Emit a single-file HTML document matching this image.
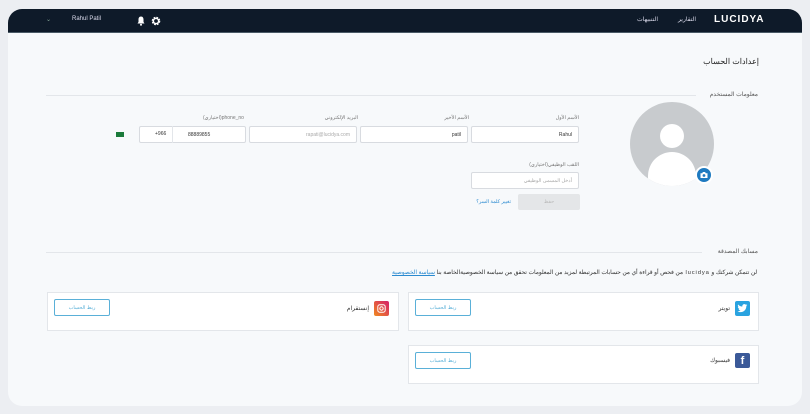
<!DOCTYPE html>
<html><head><meta charset="utf-8"><style>
*{margin:0;padding:0;box-sizing:border-box}
body{width:810px;height:414px;background:#eceef2;font-family:"Liberation Sans","Noto Sans CJK SC",sans-serif;position:relative;overflow:hidden}
.frame{position:absolute;left:8px;top:9px;width:794px;height:397px;background:#f7f9fb;border-radius:14px;overflow:hidden}
.bar{position:absolute;left:0;top:0;width:794px;height:24px;background:#0e1a29;border-bottom:1px solid #4a5a66}
.a{position:absolute;white-space:nowrap}
.r{position:absolute;white-space:nowrap;direction:rtl}
.t{font-size:6px;color:#777}
.in{position:absolute;height:17px;background:#fff;border:1px solid #d8dbe0;border-radius:2px;font-size:5px;color:#333;text-align:right;padding:5px 6px 0}
.line{position:absolute;height:1px;background:#e3e6ea}
.card{position:absolute;background:#fff;border:1px solid #e3e6ea}
.btn{position:absolute;width:56px;height:17px;border:1px solid #5ab0d8;border-radius:2px;background:#fff;font-size:5px;color:#5ab0d8;text-align:center;padding-top:5px}
</style></head><body>
<div class="frame">
<div class="bar">
<div class="a" style="left:38px;top:7px;font-size:6px;color:#8a9;">⌄</div>
<div class="a" style="left:64px;top:7px;font-size:6px;color:#dde">Rahul Patil</div>
<svg class="a" style="left:129px;top:7px" width="8" height="10" viewBox="0 0 8 10"><path d="M4 0.5C2.2 0.5 1.5 2 1.5 3.5V6L0.5 7.5H7.5L6.5 6V3.5C6.5 2 5.8 0.5 4 0.5Z" fill="#fff"/><circle cx="4" cy="8.8" r="1" fill="#fff"/></svg>
<svg class="a" style="left:143px;top:7px" width="10" height="10" viewBox="0 0 10 10"><circle cx="5" cy="5" r="3.2" fill="none" stroke="#fff" stroke-width="2.2" stroke-dasharray="1.6 0.9"/><circle cx="5" cy="5" r="2.6" fill="none" stroke="#fff" stroke-width="1.4"/></svg>
<div class="a" style="left:629px;top:7px;font-size:6px;color:#dde">التنبيهات</div>
<div class="a" style="left:670px;top:7px;font-size:6px;color:#dde">التقارير</div>
<div class="a" style="left:706px;top:5px;font-size:10px;color:#fff;font-weight:bold;letter-spacing:1px">LUCIDYA</div>
</div>
<div class="r" style="right:43px;top:48px;font-size:8px;color:#222">إعدادات الحساب</div>
<div class="r t" style="right:44px;top:82px;color:#555">معلومات المستخدم</div>
<div class="line" style="left:38px;top:86px;width:650px"></div>
<div class="r t" style="right:223px;top:106px;font-size:5px">الأسم الأول</div>
<div class="r t" style="right:333px;top:106px;font-size:5px">الأسم الأخير</div>
<div class="r t" style="right:444px;top:106px;font-size:5px">البريد الإلكتروني</div>
<div class="a t" style="left:195px;top:106px;font-size:5px">(اختياري)phone_no</div>
<div class="in" style="left:463px;top:117px;width:108px">Rahul</div>
<div class="in" style="left:352px;top:117px;width:108px">patil</div>
<div class="in" style="left:241px;top:117px;width:108px;color:#aaa">rapati@lucidya.com</div>
<div class="in" style="left:131px;top:117px;width:107px;text-align:left;padding-left:48px">88889855</div>
<div class="a" style="left:164px;top:117px;width:1px;height:17px;background:#e3e6ea"></div>
<div class="a" style="left:147px;top:122px;font-size:5px;color:#333">+966</div>
<div class="a" style="left:108px;top:123px;width:8px;height:5px;background:#1a7a3a"></div>
<div class="r t" style="right:223px;top:153px;font-size:5px">اللقب الوظيفي(اختياري)</div>
<div class="in" style="left:463px;top:163px;width:108px;color:#aaa">أدخل المسمى الوظيفي</div>
<div class="a" style="left:510px;top:185px;width:62px;height:16px;background:#e4e6e8;border-radius:2px;font-size:5px;color:#bbb;text-align:center;padding-top:5px">حفظ</div>
<div class="r" style="right:291px;top:190px;font-size:5px;color:#2a8ad0">تغيير كلمة السر؟</div>
<div class="a" style="left:622px;top:93px;width:84px;height:84px;border-radius:50%;background:#c8cbce;overflow:hidden">
<div class="a" style="left:30px;top:22px;width:24px;height:24px;border-radius:50%;background:#fff"></div>
<div class="a" style="left:18px;top:50px;width:48px;height:40px;border-radius:24px 24px 0 0;background:#fff"></div>
</div>
<div class="a" style="left:687px;top:157px;width:18px;height:18px;border-radius:50%;background:#1e7ac0;border:2px solid #fff"></div>
<svg class="a" style="left:692px;top:162px" width="8" height="8" viewBox="0 0 8 8"><path d="M0.5 2.2H2.2L2.9 1H5.1L5.8 2.2H7.5V7H0.5Z" fill="#fff"/><circle cx="4" cy="4.5" r="1.4" fill="#1e7ac0"/></svg>
<div class="r t" style="right:44px;top:239px;color:#555">مسابك المصدقة</div>
<div class="line" style="left:38px;top:243px;width:656px"></div>
<div class="r" style="right:45px;top:261px;font-size:5.8px;color:#333;letter-spacing:0.9px">لن تتمكن شركتك و lucidya من فحص أو قراءة أي من حسابات المرتبطة لمزيد من المعلومات تحقق من سياسة الخصوصيةالخاصة بنا <span style="color:#2a8ad0;text-decoration:underline">سياسة الخصوصية</span></div>
<div class="card" style="left:39px;top:283px;width:352px;height:39px"></div>
<div class="card" style="left:400px;top:283px;width:351px;height:39px"></div>
<div class="card" style="left:400px;top:336px;width:351px;height:39px"></div>
<div class="btn" style="left:46px;top:290px">ربط الحساب</div>
<div class="btn" style="left:407px;top:290px">ربط الحساب</div>
<div class="btn" style="left:407px;top:343px">ربط الحساب</div>
<div class="a" style="left:366px;top:292px;width:15px;height:15px;border-radius:2px;background:linear-gradient(45deg,#f08a20,#d41e6a)"></div>
<svg class="a" style="left:369px;top:295px" width="9" height="9" viewBox="0 0 9 9"><rect x="0.8" y="0.8" width="7.4" height="7.4" rx="2" fill="none" stroke="#fff" stroke-width="1"/><circle cx="4.5" cy="4.5" r="1.7" fill="none" stroke="#fff" stroke-width="1"/></svg>
<div class="r t" style="right:433px;top:296px;color:#333">إنستقرام</div>
<div class="a" style="left:727px;top:292px;width:15px;height:15px;border-radius:2px;background:#2aa3e0"></div>
<svg class="a" style="left:729px;top:295px" width="11" height="9" viewBox="0 0 24 20"><path d="M23 2.5c-.8.4-1.7.6-2.6.7.9-.6 1.6-1.4 2-2.5-.9.5-1.900.9-2.900 1.100C18.600.9 17.400.3 16 .3c-2.500 0-4.500 2-4.500 4.500 0 .4 0 .7.1 1C7.800 5.600 4.500 3.800 2.300 1.100 1.900 1.800 1.700 2.500 1.700 3.300c0 1.600.8 2.900 2 3.800-.7 0-1.400-.2-2-.6 0 2.200 1.600 4 3.600 4.400-.4.1-.8.2-1.200.2-.3 0-.6 0-.8-.1.6 1.800 2.200 3.100 4.200 3.100-1.500 1.200-3.500 1.900-5.600 1.900H.8c2 1.300 4.400 2 6.900 2 8.300 0 12.800-6.900 12.800-12.800v-.6c.9-.6 1.600-1.400 2.200-2.300z" fill="#fff"/></svg>
<div class="r t" style="right:72px;top:296px;color:#333">تويتر</div>
<div class="a" style="left:727px;top:344px;width:15px;height:15px;border-radius:2px;background:#3b5998;color:#fff;font-size:11px;font-weight:bold;text-align:center;padding-top:2px">f</div>
<div class="r t" style="right:72px;top:348px;color:#333">فيسبوك</div>
</div>
</body></html>
